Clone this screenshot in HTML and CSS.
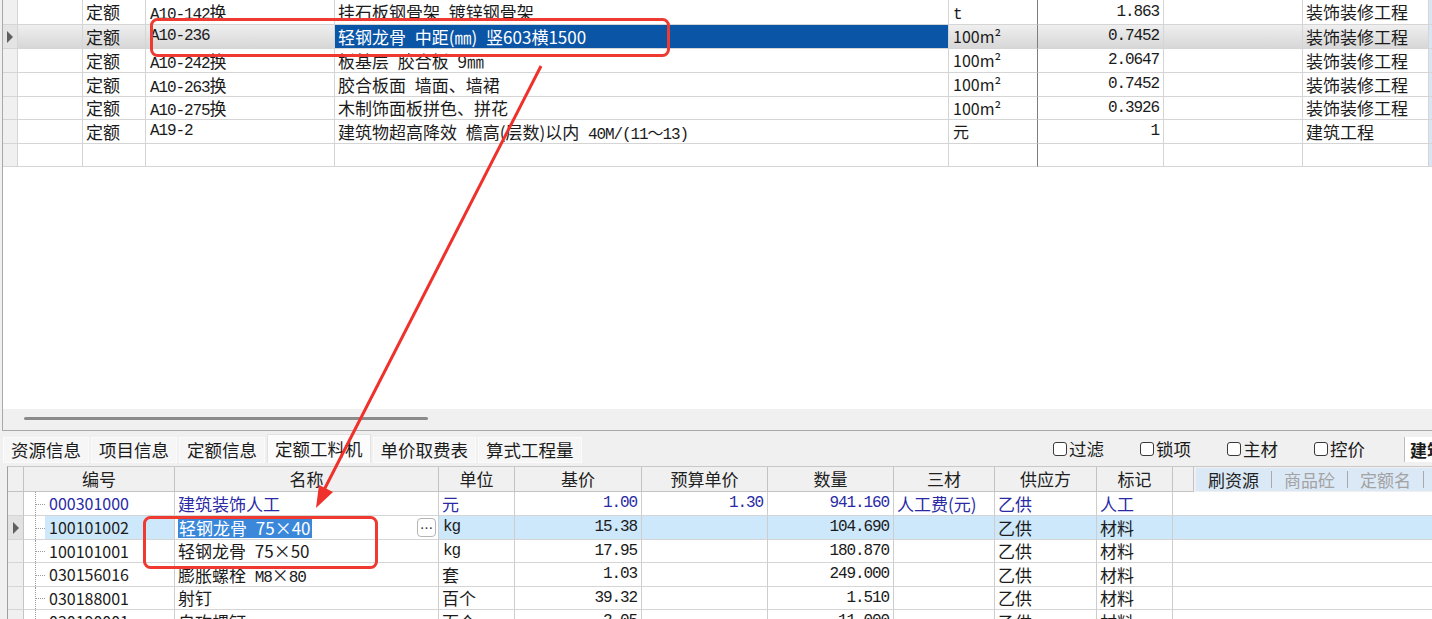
FILE: index.html
```html
<!DOCTYPE html>
<html lang="zh-CN">
<head>
<meta charset="utf-8">
<title>定额工料机</title>
<link rel="stylesheet" href="styles.css">
</head>
<body>
<section class="top">
  <div class="tgrid">
    <div class="trow h25">
      <div class="ind"></div><div></div><div>定额</div><div class="m">A10-142<span class="cj">换</span></div><div>挂石板钢骨架 镀锌钢骨架</div><div class="unit"><span class="m">t</span></div><div class="num m">1.863</div><div></div><div>装饰装修工程</div><div class="edge"></div>
    </div>
    <div class="trow sel">
      <div class="ind"><i class="arrow"></i></div><div></div><div>定额</div><div class="m">A10-236</div><div class="hl">轻钢龙骨 中距(㎜) 竖603横1500</div><div class="unit">100m²</div><div class="num m">0.7452</div><div></div><div>装饰装修工程</div><div class="edge"></div>
    </div>
    <div class="trow">
      <div class="ind"></div><div></div><div>定额</div><div class="m">A10-242<span class="cj">换</span></div><div>板基层 胶合板 9㎜</div><div class="unit">100m²</div><div class="num m">2.0647</div><div></div><div>装饰装修工程</div><div class="edge"></div>
    </div>
    <div class="trow">
      <div class="ind"></div><div></div><div>定额</div><div class="m">A10-263<span class="cj">换</span></div><div>胶合板面 墙面、墙裙</div><div class="unit">100m²</div><div class="num m">0.7452</div><div></div><div>装饰装修工程</div><div class="edge"></div>
    </div>
    <div class="trow h23">
      <div class="ind"></div><div></div><div>定额</div><div class="m">A10-275<span class="cj">换</span></div><div>木制饰面板拼色、拼花</div><div class="unit">100m²</div><div class="num m">0.3926</div><div></div><div>装饰装修工程</div><div class="edge"></div>
    </div>
    <div class="trow">
      <div class="ind"></div><div></div><div>定额</div><div class="m">A19-2</div><div>建筑物超高降效 檐高(层数)以内 <span class="m">40M/(11～13)</span></div><div class="unit">元</div><div class="num m">1</div><div></div><div>建筑工程</div><div class="edge"></div>
    </div>
    <div class="trow h23">
      <div class="ind"></div><div></div><div></div><div></div><div></div><div class="unit"></div><div></div><div></div><div></div><div class="edge"></div>
    </div>
  </div>
  <div class="filler"></div>
  <div class="hscroll"><div class="thumb"></div></div>
</section>

<div class="tabbar">
  <div class="tabs">
    <div class="tab">资源信息</div>
    <div class="tab">项目信息</div>
    <div class="tab">定额信息</div>
    <div class="tab active">定额工料机</div>
    <div class="tab">单价取费表</div>
    <div class="tab">算式工程量</div>
  </div>
  <div class="opts">
    <label class="opt"><i class="box"></i>过滤</label>
    <label class="opt"><i class="box"></i>锁项</label>
    <label class="opt"><i class="box"></i>主材</label>
    <label class="opt"><i class="box"></i>控价</label>
    <div class="combo">建筑</div>
  </div>
</div>

<section class="bottom">
  <div class="brow head">
    <div class="ind"></div><div>编号</div><div>名称</div><div>单位</div><div>基价</div><div>预算单价</div><div>数量</div><div>三材</div><div>供应方</div><div>标记</div>
    <div class="hlast"><span class="hx"></span><div class="btns"><span class="bt on">刷资源</span><span class="bt">商品砼</span><span class="bt">定额名</span></div></div>
  </div>
  <div class="brow b">
    <div class="ind"></div><div class="code"><span class="tree"></span><span class="cv">000301000</span></div><div>建筑装饰人工</div><div>元</div><div class="num m">1.00</div><div class="num m">1.30</div><div class="num m">941.160</div><div>人工费(元)</div><div>乙供</div><div>人工</div><div class="rest"></div>
  </div>
  <div class="brow sel">
    <div class="ind"><i class="arrow"></i></div><div class="code"><span class="tree"></span><span class="cv">100101002</span></div><div class="edit"><span class="pick">轻钢龙骨 75×40</span><span class="dots">⋯</span></div><div class="m">kg</div><div class="num m">15.38</div><div class="num m"></div><div class="num m">104.690</div><div></div><div>乙供</div><div>材料</div><div class="rest"></div>
  </div>
  <div class="brow h23">
    <div class="ind"></div><div class="code"><span class="tree"></span><span class="cv">100101001</span></div><div>轻钢龙骨 75×50</div><div class="m">kg</div><div class="num m">17.95</div><div class="num m"></div><div class="num m">180.870</div><div></div><div>乙供</div><div>材料</div><div class="rest"></div>
  </div>
  <div class="brow">
    <div class="ind"></div><div class="code"><span class="tree"></span><span class="cv">030156016</span></div><div>膨胀螺栓 <span class="m">M8</span>×<span class="m">80</span></div><div>套</div><div class="num m">1.03</div><div class="num m"></div><div class="num m">249.000</div><div></div><div>乙供</div><div>材料</div><div class="rest"></div>
  </div>
  <div class="brow h23">
    <div class="ind"></div><div class="code"><span class="tree"></span><span class="cv">030188001</span></div><div>射钉</div><div>百个</div><div class="num m">39.32</div><div class="num m"></div><div class="num m">1.510</div><div></div><div>乙供</div><div>材料</div><div class="rest"></div>
  </div>
  <div class="brow">
    <div class="ind"></div><div class="code"><span class="tree"></span><span class="cv">030190001</span></div><div>自攻螺钉</div><div>百个</div><div class="num m">2.05</div><div class="num m"></div><div class="num m">11.000</div><div></div><div>乙供</div><div>材料</div><div class="rest"></div>
  </div>
</section>

<svg class="annot" width="1432" height="619" viewBox="0 0 1432 619">
  <rect x="151.5" y="19.5" width="517" height="36" rx="6" fill="none" stroke="#ee3a30" stroke-width="3"/>
  <rect x="144.5" y="517.5" width="232" height="50" rx="6" fill="none" stroke="#ee3a30" stroke-width="3"/>
  <line x1="541" y1="66" x2="324" y2="490" stroke="#f0302a" stroke-width="3"/>
  <polygon points="316,508 333,492 319,485" fill="#f0302a"/>
</svg>
</body>
</html>
```

FILE: styles.css
```css
html, body {
  margin: 0;
  padding: 0;
}
body {
  width: 1432px;
  height: 619px;
  overflow: hidden;
  position: relative;
  background: #f0f0f0;
  font-family: "Noto Sans CJK SC", "Noto Sans", sans-serif;
  font-size: 17px;
  color: #1b1b1b;
}

.m {
  font-family: "Liberation Mono", "Noto Sans CJK SC", monospace;
  font-size: 16px;
  letter-spacing: -1.1px;
  word-spacing: 0;
}
.cj {
  font-family: "Noto Sans CJK SC", sans-serif;
  font-size: 17px;
  letter-spacing: 0;
}

/* ---------- top panel ---------- */
.top {
  height: 431px;
  box-sizing: border-box;
  margin-left: 2px;
  border-left: 1px solid #a9a9a9;
  border-bottom: 1px solid #a9a9a9;
  background: #fff;
  display: flex;
  flex-direction: column;
}
.tgrid {
  display: flex;
  flex-direction: column;
}
.trow {
  display: grid;
  grid-template-columns: 15px 65px 63px 189px 614px 89px 126px 139px 126px 1fr;
  grid-template-rows: minmax(0, 1fr);
  height: 24px;
  flex: none;
}
.trow.h25 { height: 25px; }
.trow.h23 { height: 23px; }
.trow > div {
  box-sizing: border-box;
  border-right: 1px solid #d5d5d5;
  border-bottom: 1px solid #d5d5d5;
  padding: 0 3px;
  white-space: nowrap;
  line-height: 23px;
  word-spacing: 5px;
  min-height: 0;
}
.trow.h25 > div { line-height: 24px; }
.trow.h23 > div { line-height: 22px; }
.trow > div.m { padding-left: 4px; }
.trow > .unit {
  border-right-color: #7d7d7d;
  padding-left: 4px;
  font-size: 16px;
}
.trow > .num {
  text-align: right;
  padding-right: 4px;
}
.trow > .ind {
  background: #f0f0f0;
  padding: 0;
  display: flex;
  align-items: center;
  justify-content: center;
}
.trow > .edge {
  background: #d7e5f5;
  border-right: none;
  padding: 0;
}
.trow.sel > div {
  background: linear-gradient(#efefef, #d7d7d7);
}
.trow.sel > .ind { background: #e4e4e4; }
.trow.sel > .hl {
  background: #0b55a7;
  color: #fff;
}
.trow.sel > .edge { background: #d7e5f5; }

.arrow {
  display: block;
  width: 0;
  height: 0;
  border-left: 6px solid #5f5f5f;
  border-top: 6px solid transparent;
  border-bottom: 6px solid transparent;
}

.filler { flex: 1; }
.hscroll {
  height: 21px;
  background: #f0f0f0;
  padding: 8px 0 0 21px;
  box-sizing: border-box;
  flex: none;
}
.thumb {
  width: 404px;
  height: 3px;
  border-radius: 2px;
  background: #8b8b8b;
}

/* ---------- tab bar ---------- */
.tabbar {
  height: 35px;
  display: grid;
  grid-template-columns: 1053px 1fr;
  box-sizing: border-box;
}
.tabs {
  display: flex;
  gap: 2px;
  padding: 6px 0 0 3px;
  align-items: flex-start;
}
.tab {
  height: 26px;
  padding: 0 7px;
  display: flex;
  align-items: center;
  box-sizing: border-box;
  background: #f6f6f6;
  border: 1px solid #fbfbfb;
  white-space: nowrap;
  line-height: 1;
  font-size: 17.5px;
}
.tab.active {
  margin-top: -3px;
  height: 29px;
  background: #fcfcfc;
  border-color: #e2e2e2;
  border-bottom-color: #fcfcfc;
}
.opts {
  display: flex;
  align-items: center;
  gap: 36px;
  white-space: nowrap;
  overflow: hidden;
  padding-top: 1px;
}
.opt {
  display: flex;
  align-items: center;
  gap: 2px;
  line-height: 1;
  font-size: 17.5px;
}
.box {
  display: block;
  width: 14px;
  height: 14px;
  box-sizing: border-box;
  border: 1px solid #3a3a3a;
  border-radius: 3px;
  background: #fff;
}
.combo {
  margin-left: 3px;
  height: 25px;
  padding: 0 5px;
  display: flex;
  align-items: center;
  background: #fff;
  border-left: 1px solid #bcbcbc;
  font-weight: bold;
  line-height: 1;
}

/* ---------- bottom table ---------- */
.bottom {
  margin-left: 7px;
  border-left: 1px solid #9f9f9f;
  border-top: 1px solid #c8c8c8;
  background: #fff;
  height: 153px;
  overflow: hidden;
}
.brow {
  display: grid;
  grid-template-columns: 16px 151px 264px 76px 127px 126px 126px 101px 102px 76px 1fr;
  grid-template-rows: minmax(0, 1fr);
  height: 24px;
}
.brow.h23 { height: 23px; }
.brow.head { height: 25px; }
.brow > div {
  box-sizing: border-box;
  border-right: 1px solid #cdcdcd;
  border-bottom: 1px solid #d5d5d5;
  padding: 0 3px;
  white-space: nowrap;
  line-height: 23px;
  word-spacing: 5px;
  min-height: 0;
}
.brow.h23 > div { line-height: 22px; }
.brow > .ind {
  background: #f0f0f0;
  padding: 0;
  display: flex;
  align-items: center;
  justify-content: center;
  border-right-color: #c4c4c4;
}
.brow > .num {
  text-align: right;
  padding-right: 4px;
}
.brow > .rest {
  border-right: none;
}
.brow > div.m { padding-left: 4px; }

.brow.head > div {
  background: #f0f0f0;
  text-align: center;
  border-right-color: #c3c3c3;
  border-bottom-color: #c3c3c3;
  color: #202020;
  line-height: 24px;
}
.brow.head > .hlast {
  border: none;
  padding: 0;
  display: flex;
  align-items: stretch;
}
.hx {
  width: 21px;
  flex: none;
  box-sizing: border-box;
  border-right: 1px solid #c3c3c3;
  border-bottom: 1px solid #c3c3c3;
}
.btns {
  display: flex;
  margin: 1px 0 1px 2px;
  background: #dbe8f6;
  flex: 1;
  overflow: hidden;
}
.bt {
  width: 76px;
  flex: none;
  display: flex;
  align-items: center;
  justify-content: center;
  color: #a3a3a3;
  box-sizing: border-box;
  border-right: 1px solid #a9a9a9;
  margin: 3px 0;
  line-height: 1;
}
.bt.on { color: #222; }

.brow.b > div { color: #2a2aa6; }

.brow > .code {
  padding: 0;
  display: flex;
}
.tree {
  width: 21px;
  flex: none;
  position: relative;
  background: #fff;
}
.tree::before {
  content: "";
  position: absolute;
  left: 11px;
  top: 0;
  bottom: 0;
  border-left: 1px dotted #9a9a9a;
}
.tree::after {
  content: "";
  position: absolute;
  left: 11px;
  width: 10px;
  top: 50%;
  border-top: 1px dotted #9a9a9a;
}
.cv {
  flex: 1;
  padding-left: 4px;
  font-size: 16px;
}

.brow.sel > div { background: #cde8fb; }
.brow.sel > .ind { background: #e2e2e2; }
.brow.sel > .code { background: #fff; }
.brow.sel .cv { background: #cde8fb; }
.brow.sel > .edit {
  background: #fff;
  padding-left: 3px;
  padding-right: 2px;
  display: flex;
  align-items: center;
}
.pick {
  background: #3b88db;
  color: #fff;
  line-height: 20px;
  padding: 0 1px;
}
.dots {
  margin-left: auto;
  width: 19px;
  height: 19px;
  box-sizing: border-box;
  border: 1px solid #b5b5b5;
  border-radius: 4px;
  background: #fff;
  font-size: 13px;
  line-height: 1;
  word-spacing: 0;
  display: flex;
  align-items: center;
  justify-content: center;
  color: #333;
}

/* ---------- annotation overlay ---------- */
.annot {
  position: absolute;
  left: 0;
  top: 0;
  pointer-events: none;
}
```
